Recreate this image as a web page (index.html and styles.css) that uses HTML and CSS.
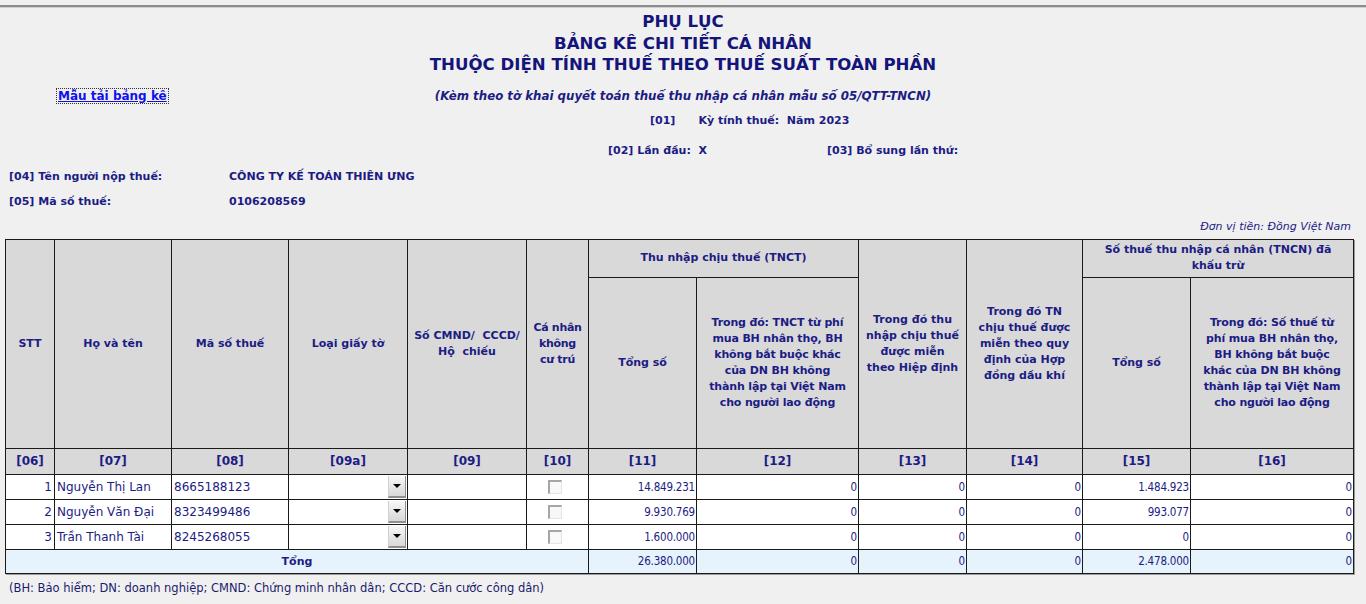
FILE: index.html
```html
<!DOCTYPE html>
<html lang="vi">
<head>
<meta charset="utf-8">
<title>Phụ lục bảng kê</title>
<link rel="stylesheet" href="styles.css">
</head>
<body>
<div class="topline"></div>
<div class="titles">
  <div>PHỤ LỤC</div>
  <div>BẢNG KÊ CHI TIẾT CÁ NHÂN</div>
  <div>THUỘC DIỆN TÍNH THUẾ THEO THUẾ SUẤT TOÀN PHẦN</div>
</div>
<div class="subrow">
  <div class="linkcell"><a class="dl" href="#">Mẫu tải bảng kê</a></div>
  <div class="subtitle">(Kèm theo tờ khai quyết toán thuế thu nhập cá nhân mẫu số 05/QTT-TNCN)</div>
  <div></div>
</div>
<div class="row01"><span>[01]</span><span>Kỳ tính thuế:&nbsp; Năm 2023</span></div>
<div class="row02"><span class="r02">[02] Lần đầu:&nbsp; X</span><span>[03] Bổ sung lần thứ:</span></div>
<div class="info first"><span class="lbl">[04] Tên người nộp thuế:</span><span>CÔNG TY KẾ TOÁN THIÊN ƯNG</span></div>
<div class="info"><span class="lbl">[05] Mã số thuế:</span><span>0106208569</span></div>
<div class="unit">Đơn vị tiền: Đồng Việt Nam</div>
<div class="tablewrap">
<table class="grid">
  <colgroup>
    <col style="width:49px"><col style="width:117px"><col style="width:117px"><col style="width:119px"><col style="width:119px"><col style="width:62px"><col style="width:108px"><col style="width:162px"><col style="width:108px"><col style="width:116px"><col style="width:108px"><col style="width:163px">
  </colgroup>
  <thead>
    <tr class="h1">
      <th rowspan="2">STT</th>
      <th rowspan="2">Họ và tên</th>
      <th rowspan="2">Mã số thuế</th>
      <th rowspan="2">Loại giấy tờ</th>
      <th rowspan="2" class="tight">Số CMND/&nbsp; CCCD/<br>Hộ&nbsp; chiếu</th>
      <th rowspan="2" class="tight2">Cá nhân<br>không<br>cư trú</th>
      <th colspan="2">Thu nhập chịu thuế (TNCT)</th>
      <th rowspan="2">Trong đó thu<br>nhập chịu thuế<br>được miễn<br>theo Hiệp định</th>
      <th rowspan="2">Trong đó TN<br>chịu thuế được<br>miễn theo quy<br>định của Hợp<br>đồng dầu khí</th>
      <th colspan="2">Số thuế thu nhập cá nhân (TNCN) đã<br>khấu trừ</th>
    </tr>
    <tr class="h2">
      <th>Tổng số</th>
      <th class="nw">Trong đó: TNCT từ phí<br>mua BH nhân thọ, BH<br>không bắt buộc khác<br>của DN BH không<br>thành lập tại Việt Nam<br>cho người lao động</th>
      <th>Tổng số</th>
      <th class="nw">Trong đó: Số thuế từ<br>phí mua BH nhân thọ,<br>BH không bắt buộc<br>khác của DN BH không<br>thành lập tại Việt Nam<br>cho người lao động</th>
    </tr>
    <tr class="nums">
      <th>[06]</th><th>[07]</th><th>[08]</th><th>[09a]</th><th>[09]</th><th>[10]</th><th>[11]</th><th>[12]</th><th>[13]</th><th>[14]</th><th>[15]</th><th>[16]</th>
    </tr>
  </thead>
  <tbody>
    <tr class="data">
      <td class="stt">1</td><td class="txt">Nguyễn Thị Lan</td><td class="txt">8665188123</td>
      <td class="sel"><div class="select"><span class="btn"><i></i></span></div></td>
      <td></td><td class="chk"><span class="box"></span></td>
      <td class="num">14.849.231</td><td class="num">0</td><td class="num">0</td><td class="num">0</td><td class="num">1.484.923</td><td class="num">0</td>
    </tr>
    <tr class="data">
      <td class="stt">2</td><td class="txt">Nguyễn Văn Đại</td><td class="txt">8323499486</td>
      <td class="sel"><div class="select"><span class="btn"><i></i></span></div></td>
      <td></td><td class="chk"><span class="box"></span></td>
      <td class="num">9.930.769</td><td class="num">0</td><td class="num">0</td><td class="num">0</td><td class="num">993.077</td><td class="num">0</td>
    </tr>
    <tr class="data">
      <td class="stt">3</td><td class="txt">Trần Thanh Tài</td><td class="txt">8245268055</td>
      <td class="sel"><div class="select"><span class="btn"><i></i></span></div></td>
      <td></td><td class="chk"><span class="box"></span></td>
      <td class="num">1.600.000</td><td class="num">0</td><td class="num">0</td><td class="num">0</td><td class="num">0</td><td class="num">0</td>
    </tr>
    <tr class="total">
      <td colspan="6" class="tlabel">Tổng</td>
      <td class="num">26.380.000</td><td class="num">0</td><td class="num">0</td><td class="num">0</td><td class="num">2.478.000</td><td class="num">0</td>
    </tr>
  </tbody>
</table>
</div>
<div class="note">(BH: Bảo hiểm; DN: doanh nghiệp; CMND: Chứng minh nhân dân; CCCD: Căn cước công dân)</div>
</body>
</html>
```
FILE: styles.css
```css
html, body {
  margin: 0;
  padding: 0;
  background: #f0f0f0;
}
body {
  font-family: "DejaVu Sans", sans-serif;
  font-size: 11px;
  color: #1c1c84;
  width: 1366px;
  height: 604px;
  overflow: hidden;
}
.topline {
  margin-top: 5px;
  height: 0;
  border-top: 2px solid #8c8c8c;
  border-bottom: 1px solid #cfcfcf;
}
.titles {
  padding-top: 3px;
  text-align: center;
  font-size: 16.6px;
  font-weight: bold;
  line-height: 21.5px;
  color: #14147a;
}
.subrow {
  display: grid;
  grid-template-columns: 1fr auto 1fr;
  align-items: center;
  margin-top: 12px;
  height: 16px;
}
.linkcell {
  padding-left: 57px;
}
.dl {
  font-size: 12px;
  font-weight: bold;
  color: #1010ee;
  text-decoration: underline;
  outline: 1px dotted #333;
  padding: 0 1px;
}
.subtitle {
  font-style: italic;
  font-weight: bold;
  font-size: 11.8px;
}
.row01 {
  display: flex;
  margin-top: 9px;
  padding-left: 650px;
  gap: 23px;
  font-weight: bold;
  height: 16px;
  align-items: center;
}
.row02 {
  display: flex;
  margin-top: 14px;
  padding-left: 608px;
  font-weight: bold;
  height: 16px;
  align-items: center;
}
.r02 {
  width: 219px;
}
.info {
  display: flex;
  padding-left: 9px;
  font-weight: bold;
  height: 25px;
  align-items: center;
}
.info.first {
  margin-top: 5px;
}
.lbl {
  width: 220px;
}
.unit {
  text-align: right;
  padding-right: 15px;
  font-style: italic;
  height: 13px;
  line-height: 13px;
  margin-top: 6px;
}
.tablewrap {
  margin-top: 6px;
  padding-left: 5px;
}
.grid {
  border-collapse: collapse;
  table-layout: fixed;
  width: 1348px;
  border: 1px solid #000;
  box-shadow: 1px 1px 0 #9a9a9a;
}
.grid th, .grid td {
  border: 1px solid #1a1a1a;
  padding: 0;
}
.grid th {
  background: #d9d9d9;
  font-weight: bold;
  text-align: center;
  vertical-align: middle;
  line-height: 16px;
  color: #1c1c84;
  white-space: nowrap;
}
.grid th.nw {
  letter-spacing: -0.15px;
}
.grid th.tight {
  letter-spacing: 0;
}
.grid th.tight2 {
  letter-spacing: -0.3px;
}
.h1 {
  height: 38px;
}
.h2 {
  height: 171px;
}
.nums {
  height: 26px;
}
.nums th {
  font-size: 12px;
}
.data {
  height: 25px;
}
.data td {
  background: #fff;
}
.stt {
  text-align: right;
  padding-right: 2px !important;
  font-size: 12px;
}
.txt {
  padding-left: 2px !important;
  font-size: 12px;
  white-space: nowrap;
}
.sel {
  vertical-align: middle;
}
.select {
  display: flex;
  justify-content: flex-end;
  padding-right: 1px;
  height: 22px;
}
.btn {
  width: 18px;
  height: 22px;
  background: linear-gradient(#f8f8f8, #d8d8d8);
  border-left: 1px solid #d0d0d0;
  border-right: 1px solid #8f8f8f;
  border-bottom: 2px solid #8f8f8f;
  box-sizing: border-box;
  display: flex;
  align-items: center;
  justify-content: center;
}
.btn i {
  width: 0;
  height: 0;
  border-left: 4px solid transparent;
  border-right: 4px solid transparent;
  border-top: 4px solid #000;
}
.chk {
  text-align: center;
  vertical-align: middle;
}
.box {
  display: inline-block;
  width: 14px;
  height: 14px;
  margin-right: 6px;
  box-sizing: border-box;
  border-top: 2px solid #a6a6a6;
  border-left: 2px solid #a6a6a6;
  border-right: 1px solid #e4e4e4;
  border-bottom: 1px solid #e4e4e4;
  background: #f8f8f8;
  vertical-align: middle;
}
.num {
  text-align: right;
  padding-right: 1px !important;
  font-family: "DejaVu Sans Condensed", "DejaVu Sans", sans-serif;
  font-size: 11.5px;
  letter-spacing: -0.2px;
}
.total {
  height: 24px;
}
.total td {
  background: #e6f3fc;
}
.tlabel {
  text-align: center;
  font-weight: bold;
}
.note {
  padding-left: 9px;
  margin-top: 7px;
  font-size: 11.5px;
  color: #1a1a6e;
}
```
